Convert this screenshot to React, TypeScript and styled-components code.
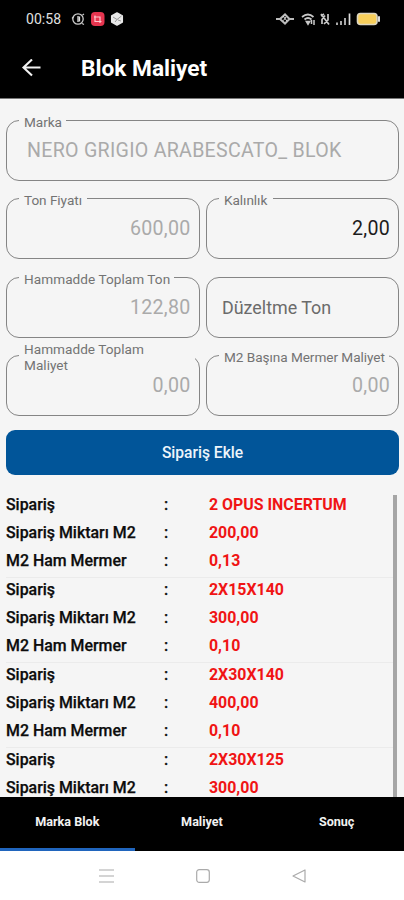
import React from "react";
import styled, { createGlobalStyle } from "styled-components";

const GlobalStyle = createGlobalStyle`
  * { box-sizing: border-box; }
  body { margin: 0; background: #fff; font-family: Roboto, "Liberation Sans", sans-serif; }
`;

const Screen = styled.div`
  width: 404px;
  height: 900px;
  display: flex;
  flex-direction: column;
  overflow: hidden;
  background: #f5f5f5;
`;

const StatusBar = styled.div`
  height: 38px;
  flex: none;
  display: flex;
  align-items: center;
  justify-content: space-between;
  padding: 0 23px 0 26px;
  background: #000;
`;

const StatusGroup = styled.div<{ $gap: number }>`
  display: flex;
  align-items: center;
  gap: ${(p) => p.$gap}px;
`;

const Clock = styled.span`
  width: 39px;
  font-size: 14px;
  letter-spacing: 0.05px;
  line-height: 16px;
  color: #e0e0e0;
`;

const Header = styled.header`
  height: 61px;
  flex: none;
  display: flex;
  align-items: center;
  gap: 39px;
  padding: 2px 0 0 21px;
  background: #000;
  border-bottom: 1px solid #777;
`;

const Title = styled.h1`
  margin: 0;
  font-size: 22.7px;
  font-weight: 700;
  line-height: 28px;
  color: #fff;
`;

const Form = styled.main`
  flex: none;
  display: grid;
  grid-template-columns: 193.5px 193px;
  column-gap: 6.5px;
  row-gap: 17.4px;
  padding: 21px 5px 0 6px;
`;

const Field = styled.div<{ $wide?: boolean }>`
  position: relative;
  grid-column: ${(p) => (p.$wide ? "1 / -1" : "auto")};
  height: 61px;
  display: flex;
  align-items: center;
  border: 1.4px solid #858585;
  border-radius: 13px;
`;

const FieldLabel = styled.label<{ $width: number; $lines?: number; $track?: number }>`
  position: absolute;
  left: 12px;
  top: ${(p) => (p.$lines === 2 ? -15 : -7)}px;
  width: ${(p) => p.$width}px;
  padding-left: 5px;
  font-size: 13.6px;
  letter-spacing: ${(p) => p.$track ?? -0.05}px;
  line-height: 16px;
  white-space: pre;
  color: #737373;
  background: #f5f5f5;
`;

const Value = styled.span<{ $active?: boolean; $align?: "left" | "right" }>`
  flex: 1;
  padding: ${(p) => (p.$align === "left" ? "1px 0 0 20px" : "1px 8px 0 0")};
  text-align: ${(p) => p.$align ?? "right"};
  font-size: 19.6px;
  letter-spacing: 0.28px;
  line-height: 24px;
  color: ${(p) => (p.$active ? "#1c1c1c" : "#aaa")};
`;

const Placeholder = styled.span`
  padding: 1px 0 0 15px;
  font-size: 17.9px;
  line-height: 24px;
  color: #6b6b6b;
`;

const AddButton = styled.button`
  flex: none;
  height: 45px;
  margin: 13.4px 5px 0 6px;
  padding: 2px 0 0;
  border: 0;
  border-radius: 9px;
  background: #015599;
  color: #eef5fb;
  font: 500 15.6px/20px Roboto, sans-serif;
`;

const List = styled.section`
  flex: 1;
  min-height: 0;
  display: flex;
  justify-content: space-between;
  overflow: hidden;
  margin-top: 18px;
  padding: 0 7px 0 6px;
`;

const Orders = styled.div`
  flex: 1;
`;

const Order = styled.div`
  height: 85px;
  border-bottom: 1px solid #ebebeb;
  &:last-child { height: auto; border: 0; }
`;

const OrderLine = styled.div`
  height: 28.2px;
  display: grid;
  grid-template-columns: 158px 45px 1fr;
  align-items: start;
  font-size: 15.9px;
  font-weight: 500;
  line-height: 24px;
  color: #0c0c0c;
  -webkit-text-stroke: 0.25px currentColor;
`;

const OrderValue = styled.span`
  font-weight: 700;
  color: #f01414;
  -webkit-text-stroke: 0;
`;

const ScrollThumb = styled.div`
  width: 4px;
  margin-top: 2px;
  background: #a6a6a6;
`;

const Tabs = styled.nav`
  flex: none;
  height: 54px;
  display: grid;
  grid-template-columns: repeat(3, 1fr);
  background: #000;
`;

const Tab = styled.div<{ $active?: boolean }>`
  padding-top: 17px;
  border-bottom: 3px solid ${(p) => (p.$active ? "#2065bd" : "#000")};
  text-align: center;
  font-size: 12.6px;
  font-weight: 700;
  line-height: 16px;
  color: #f2f2f2;
`;

const SystemNav = styled.footer`
  flex: none;
  height: 49px;
  display: flex;
  justify-content: center;
  align-items: center;
  gap: 82px;
  padding-left: 1px;
  background: #fff;
`;

const orders = [
  ["2 OPUS INCERTUM", "200,00", "0,13"],
  ["2X15X140", "300,00", "0,10"],
  ["2X30X140", "400,00", "0,10"],
  ["2X30X125", "300,00"],
];
const captions = ["Sipariş", "Sipariş Miktarı M2", "M2 Ham Mermer"];

function NotificationIcons() {
  return (
    <svg width="54" height="16" viewBox="0 0 54 16" fill="none">
      <circle cx="7" cy="8" r="5.2" stroke="#ccc" strokeWidth="1.3" />
      <path d="M1 7.5 2.5 6M11.5 4l1.5-1M11 12.5l2 1" stroke="#ccc" strokeWidth="1.2" />
      <path d="M7 5v6M8.5 5.5v5" stroke="#ddd" strokeWidth="1.3" />
      <rect x="20" y="1" width="13.5" height="14" rx="4" fill="#e6354f" />
      <path d="M24 4.5v6h6.5M23 6h6v6" stroke="#ffc5cc" strokeWidth="1.2" />
      <path d="m46 2 5.3 3v6L46 14l-5.3-3V5Z" fill="#e8e8e8" stroke="#e8e8e8" strokeWidth="1.5" strokeLinejoin="round" />
      <path d="m42 6 4 2.5L50.5 5M46 8.5 44 11M47 9l3 1" stroke="#999" />
    </svg>
  );
}

function DeviceIcons() {
  return (
    <svg width="106" height="16" viewBox="0 0 106 16" fill="none">
      <path d="M1 8h4M14 8h5M5 8l5-4.5L14.5 8l-4.5 4.5Z" stroke="#bbb" strokeWidth="2" />
      <path d="m8 5 4 5M8.5 9.5 11 6" stroke="#ddd" />
      <path d="M27 6q6-5 11.5 0M29.5 8.5q3.5-3 7 0M31.5 10.5h3L33 13Z" stroke="#c8c8c8" strokeWidth="1.7" />
      <path d="M36.5 13V9M39 9v5" stroke="#ccc" strokeWidth="1.5" />
      <path d="m46 3 8 10.5M47 13V8.5l3-4M53 3v6l-4 4M46 5l3-2" stroke="#c8c8c8" strokeWidth="1.7" />
      <path d="M62 14v-2.5M66 14v-4M70 14V7" stroke="#bbb" strokeWidth="1.8" />
      <path d="M74.5 14V2.5" stroke="#ddd" strokeWidth="1.7" />
      <rect x="82.5" y="2.5" width="19.5" height="11" rx="3" fill="#f8cf5b" stroke="#ddd7c3" strokeWidth="1.6" />
      <path d="M104 6v4" stroke="#ddd" strokeWidth="2" strokeLinecap="round" />
    </svg>
  );
}

export default function App() {
  return (
    <Screen>
      <GlobalStyle />
      <StatusBar>
        <StatusGroup $gap={6}>
          <Clock>00:58</Clock>
          <NotificationIcons />
        </StatusGroup>
        <DeviceIcons />
      </StatusBar>
      <Header>
        <svg width="21" height="20" viewBox="0 0 21 20" fill="none" stroke="#f2f2f2" strokeWidth="2.1">
          <path d="M19.5 8.500H3M11 .5 2.500 8.500 11 16.500" />
        </svg>
        <Title>Blok Maliyet</Title>
      </Header>

      <Form>
        <Field $wide>
          <FieldLabel $width={47}>Marka</FieldLabel>
          <Value $align="left">NERO GRIGIO ARABESCATO_ BLOK</Value>
        </Field>
        <Field>
          <FieldLabel $width={68}>Ton Fiyatı</FieldLabel>
          <Value>600,00</Value>
        </Field>
        <Field>
          <FieldLabel $width={54}>Kalınlık</FieldLabel>
          <Value $active>2,00</Value>
        </Field>
        <Field>
          <FieldLabel $width={155} $track={0.05}>Hammadde Toplam Ton</FieldLabel>
          <Value>122,80</Value>
        </Field>
        <Field>
          <Placeholder>Düzeltme Ton</Placeholder>
        </Field>
        <Field>
          <FieldLabel $width={176} $lines={2} $track={0.03}>{"Hammadde Toplam\nMaliyet"}</FieldLabel>
          <Value>0,00</Value>
        </Field>
        <Field>
          <FieldLabel $width={170}>M2 Başına Mermer Maliyet</FieldLabel>
          <Value>0,00</Value>
        </Field>
      </Form>

      <AddButton>Sipariş Ekle</AddButton>

      <List>
        <Orders>
          {orders.map((values) => (
            <Order key={values[0]}>
              {values.map((value, i) => (
                <OrderLine key={captions[i]}>
                  <span>{captions[i]}</span>
                  <span>:</span>
                  <OrderValue>{value}</OrderValue>
                </OrderLine>
              ))}
            </Order>
          ))}
        </Orders>
        <ScrollThumb />
      </List>

      <Tabs>
        <Tab $active>Marka Blok</Tab>
        <Tab>Maliyet</Tab>
        <Tab>Sonuç</Tab>
      </Tabs>
      <SystemNav>
        <svg width="15" height="14" viewBox="0 0 15 14" stroke="#aaa" strokeWidth="1.2">
          <path d="M0 1h15M0 7h15M0 13h15" />
        </svg>
        <svg width="14" height="14" viewBox="0 0 14 14" fill="none" stroke="#aaa" strokeWidth="1.2">
          <rect x=".7" y=".7" width="12.6" height="12.6" rx="2.5" />
        </svg>
        <svg width="15" height="14" viewBox="0 0 15 14" fill="none" stroke="#aaa" strokeWidth="1.2" strokeLinejoin="round">
          <path d="M1 7 13 1v12Z" />
        </svg>
      </SystemNav>
    </Screen>
  );
}
